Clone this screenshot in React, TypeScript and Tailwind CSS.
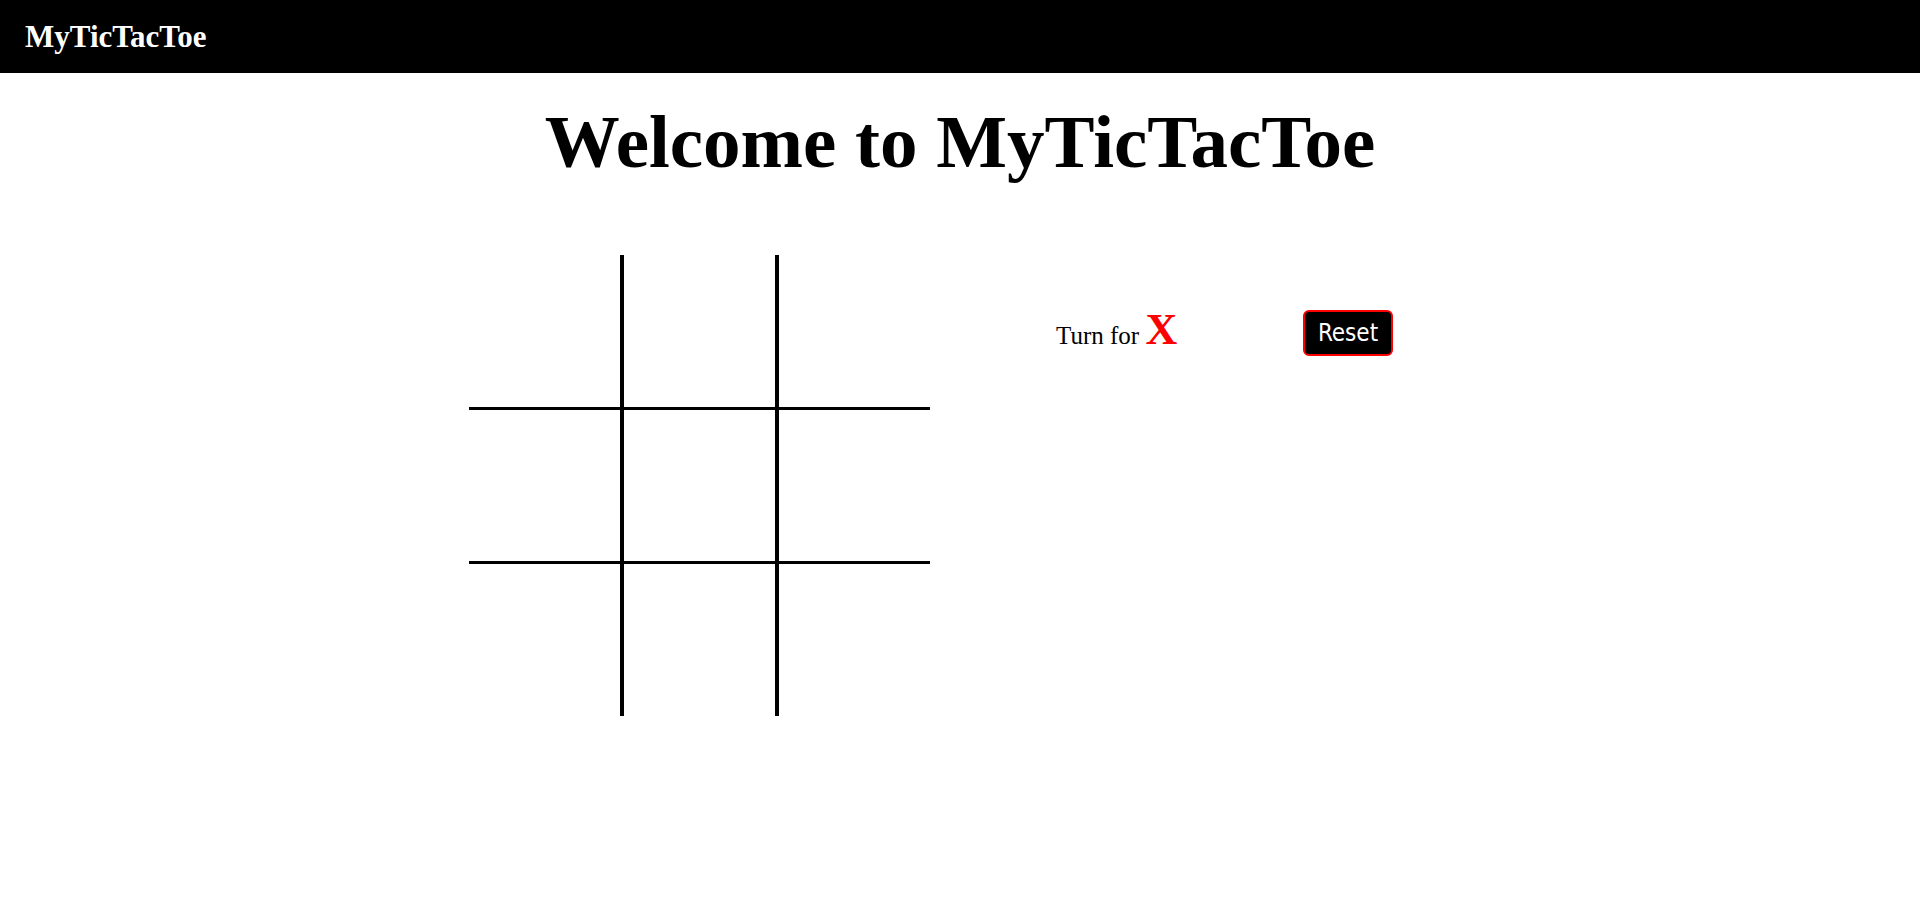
import { useState } from "react";

type Cell = "X" | "O" | null;

function Board({ cells, onPlay }: { cells: Cell[]; onPlay: (i: number) => void }) {
  return (
    <div className="grid h-[461px] w-[461px] grid-cols-3 grid-rows-3 gap-x-[4px] gap-y-[3px] bg-black">
      {cells.map((c, i) => (
        <button
          key={i}
          onClick={() => onPlay(i)}
          className={`flex items-center justify-center bg-white text-[96px] font-bold leading-none ${
            c === "X" ? "text-[#ff0000]" : "text-black"
          }`}
        >
          {c}
        </button>
      ))}
    </div>
  );
}

export default function App() {
  const [cells, setCells] = useState<Cell[]>(Array(9).fill(null));
  const [turn, setTurn] = useState<"X" | "O">("X");

  const play = (i: number) => {
    if (cells[i]) return;
    const next = cells.slice();
    next[i] = turn;
    setCells(next);
    setTurn(turn === "X" ? "O" : "X");
  };

  const reset = () => {
    setCells(Array(9).fill(null));
    setTurn("X");
  };

  return (
    <div className="min-h-screen bg-white font-['Liberation_Serif','Times_New_Roman',serif] text-black">
      <header className="flex h-[73px] items-center bg-black px-[25px]">
        <div className="text-[31px] font-bold leading-none text-white">MyTicTacToe</div>
      </header>

      <h1 className="mt-[31px] text-center text-[75px] font-bold leading-none">
        Welcome to MyTicTacToe
      </h1>

      <div className="mx-auto mt-[76px] flex w-[982px] items-start">
        <Board cells={cells} onPlay={play} />
        <div className="ml-[126px] mt-[53px] flex w-[337px] items-center justify-between">
          <div className="mb-[6px] text-[25px] leading-none">
            Turn for{" "}
            <span
              className={`text-[44px] font-bold ${
                turn === "X" ? "text-[#ff0000]" : "text-black"
              }`}
            >
              {turn}
            </span>
          </div>
          <button
            onClick={reset}
            className="flex h-[46px] w-[90px] items-center justify-center rounded-md border-2 border-[#ff0000] bg-black font-['DejaVu_Sans_Condensed','DejaVu_Sans',sans-serif] text-[24px] leading-none text-white"
          >
            Reset
          </button>
        </div>
      </div>
    </div>
  );
}
